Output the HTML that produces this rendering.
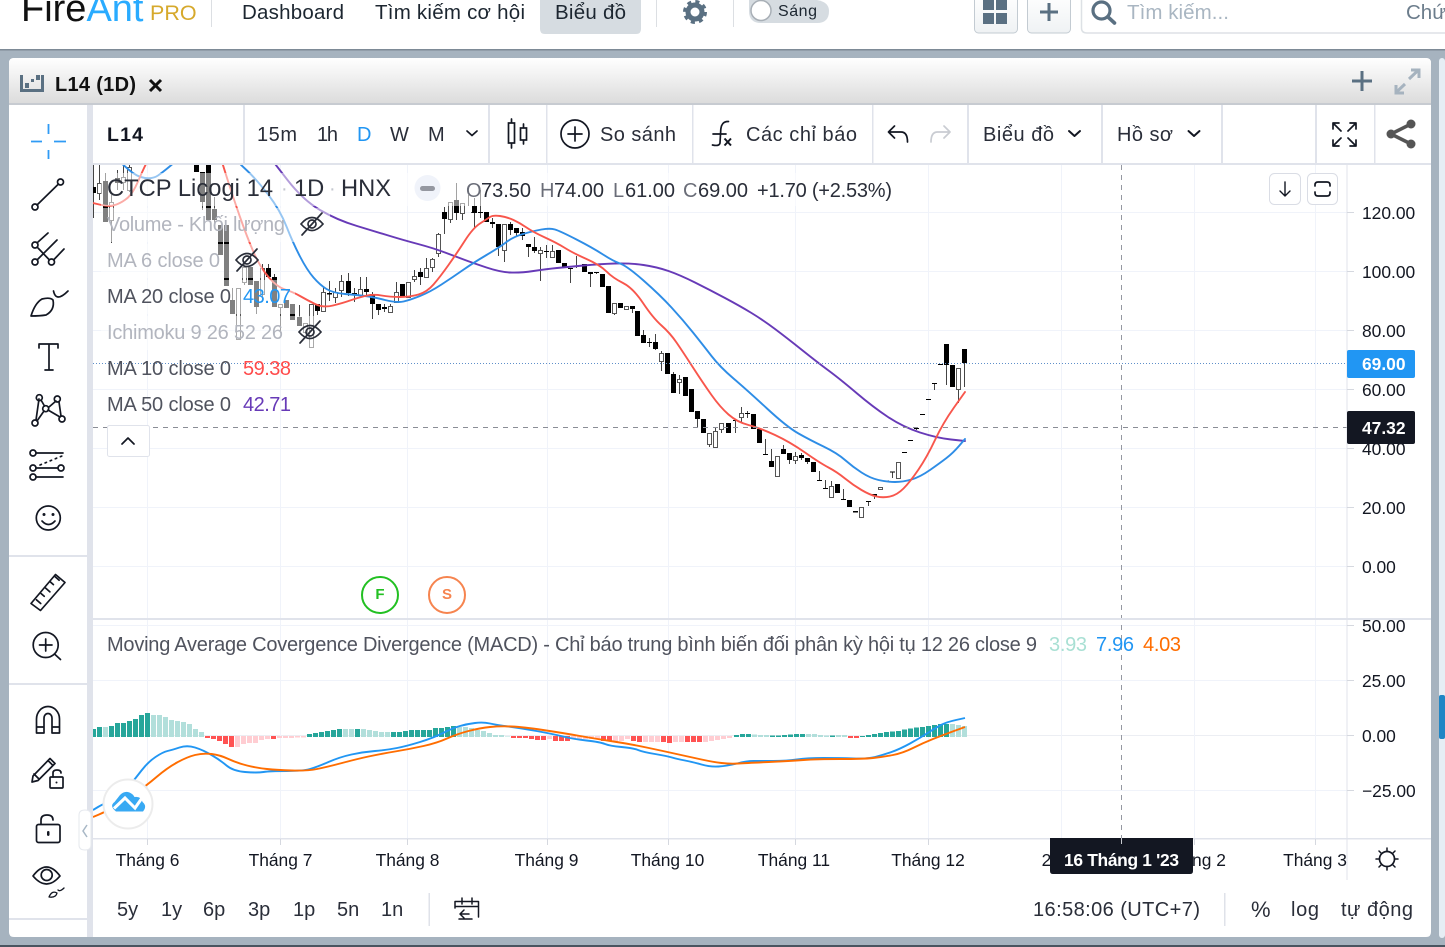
<!DOCTYPE html>
<html lang="vi"><head><meta charset="utf-8"><title>FireAnt PRO - L14</title>
<style>
html,body{margin:0;padding:0;width:1445px;height:947px;overflow:hidden;background:#a6b3bf}
svg{display:block}
text{font-family:"Liberation Sans","Noto Sans CJK SC",sans-serif;fill:#131722}
.ic{fill:none;stroke:#131722;stroke-width:1.7;stroke-linecap:round;stroke-linejoin:round}
.ic2{fill:#fff;stroke:#131722;stroke-width:1.7}
.sep{fill:#e0e3eb}
.tb{font-size:20px;fill:#2a2e39}
.ax{font-size:17.4px;fill:#131722}
.lg{font-size:20px}
</style></head><body>
<svg width="1445" height="947" viewBox="0 0 1445 947" xmlns="http://www.w3.org/2000/svg">
<defs>
<linearGradient id="hd" x1="0" y1="0" x2="0" y2="1"><stop offset="0" stop-color="#fff"/><stop offset="1" stop-color="#dcdcdc"/></linearGradient>
<linearGradient id="bt" x1="0" y1="0" x2="0" y2="1"><stop offset="0" stop-color="#fff"/><stop offset="1" stop-color="#eff2f4"/></linearGradient>
<clipPath id="cp"><rect x="93" y="165" width="1254" height="453"/></clipPath>
<clipPath id="cm"><rect x="93" y="620" width="1254" height="218"/></clipPath>
<g id="eye"><path d="M-11 0Q0-13 11 0Q0 13-11 0Z" fill="none" stroke="#2a2e39" stroke-width="1.7"/><circle r="4" fill="none" stroke="#2a2e39" stroke-width="1.7"/><path d="M-10 11L10-11" stroke="#2a2e39" stroke-width="1.7" stroke-linecap="round"/></g>
</defs>

<!-- page -->
<rect width="1445" height="947" fill="#a6b3bf"/>
<rect x="0" y="945" width="1445" height="2" fill="#4a5560"/>
<rect x="0" y="0" width="1445" height="49" fill="#fff"/>
<rect x="0" y="49" width="1445" height="1.5" fill="#7d8a96"/>
<rect x="1439" y="58" width="6" height="880" rx="3" fill="#e6eef5"/>
<rect x="1439" y="695" width="6" height="44" rx="2" fill="#1f86c5"/>

<!-- top nav -->
<text x="21" y="21" font-size="38" style="fill:#111">Fire<tspan style="fill:#29abff">Ant</tspan></text>
<text x="150" y="20" font-size="21.5" style="fill:#d6a92c">PRO</text>
<rect x="211" y="0" width="1" height="27" fill="#dcdfe3"/>
<text x="242" y="19" font-size="20.5" textLength="102" style="fill:#1c2630">Dashboard</text>
<text x="375" y="19" font-size="20.5" textLength="150" style="fill:#1c2630">Tìm kiếm cơ hội</text>
<path d="M540 0H641V29Q641 34 636 34H545Q540 34 540 29Z" fill="#d6dce1"/>
<text x="555" y="19" font-size="20.5" textLength="71" style="fill:#1c2630">Biểu đồ</text>
<rect x="656" y="0" width="1" height="27" fill="#dcdfe3"/>
<circle cx="695" cy="12" r="7" fill="none" stroke="#5a7082" stroke-width="5"/>
<circle cx="695" cy="12" r="10.5" fill="none" stroke="#5a7082" stroke-width="3" stroke-dasharray="4.1 4.15"/>
<rect x="733" y="0" width="1" height="27" fill="#dcdfe3"/>
<path d="M749 0H817Q829 2 829 11Q829 23 817 23H761Q749 23 749 11Z" fill="#d6dce1"/>
<circle cx="761" cy="10.5" r="10" fill="#fff" stroke="#a8afb6" stroke-width="1.5"/>
<text x="778" y="16" font-size="16" textLength="39" style="fill:#1c2630">Sáng</text>

<rect x="974.5" y="-6" width="43" height="39" rx="4" fill="url(#bt)" stroke="#c3cbd2"/>
<path d="M983 0h11v10h-11zM996 0h11v10h-11zM983 13h11v11h-11zM996 13h11v11h-11z" fill="#5a7082"/>
<rect x="1027.5" y="-6" width="43" height="39" rx="4" fill="url(#bt)" stroke="#c3cbd2"/>
<path d="M1040 12h18M1049 3v18" stroke="#5a7082" stroke-width="3"/>
<path d="M1081.5 0V28Q1081.5 33 1087 33H1445" fill="none" stroke="#dde1e5" stroke-width="1.5"/>
<circle cx="1101.5" cy="10.5" r="8.5" fill="none" stroke="#5a7082" stroke-width="3.2"/>
<path d="M1108 17L1114.5 23" stroke="#5a7082" stroke-width="3.6" stroke-linecap="round"/>
<text x="1127" y="19" font-size="20.5" textLength="102" style="fill:#a9b6c2">Tìm kiếm...</text>
<text x="1406" y="19" font-size="20.5" style="fill:#6c7d8c">Chứng khoán</text>

<!-- panel -->
<path d="M14 58H1426Q1431 58 1431 63V932Q1431 937 1426 937H14Q9 937 9 932V63Q9 58 14 58Z" fill="#fff"/>
<path d="M14 58H1426Q1431 58 1431 63V103H9V63Q9 58 14 58Z" fill="url(#hd)"/>
<rect x="9" y="103" width="1422" height="2" fill="#c7cbd1"/>
<path d="M20 75h3v14h18v-14h3v17h-24z" fill="#5a7082"/>
<path d="M25 83h4v5h-4zM31 79h3v3h-3zM36 75h4v5h-4z" fill="#5a7082"/>
<text x="55" y="91" font-size="20" font-weight="700" textLength="81" style="fill:#111">L14 (1D)</text>
<path d="M150 80L161 91M161 80L150 91" stroke="#111" stroke-width="3"/>
<path d="M1352 81h20M1362 71v20" stroke="#5a7082" stroke-width="3"/>
<path d="M1395.5 93L1405 84M1396 85v8h8M1409 79L1418.5 70M1411 70h8v8" fill="none" stroke="#a6b3bf" stroke-width="3"/>

<!-- gutters -->
<rect x="87" y="105" width="6" height="832" fill="#e0e3eb"/>
<rect x="9" y="555" width="78" height="2" fill="#e0e3eb"/>
<rect x="9" y="683" width="78" height="2" fill="#e0e3eb"/>
<rect x="9" y="918" width="78" height="2" fill="#e0e3eb"/>

<!-- top toolbar -->
<rect x="93" y="163" width="1338" height="2" fill="#e0e3eb"/>
<path class="sep" d="M243 105h2v58h-2zM488 105h2v58h-2zM546 105h1.5v58h-1.5zM692 105h1.5v58h-1.5zM872 105h1.5v58h-1.5zM967 105h2v58h-2zM1101 105h2v58h-2zM1221 105h2v58h-2zM1315 105h2v58h-2zM1374 105h1.5v58h-1.5z"/>
<text x="107" y="141" font-size="19.5" font-weight="700" textLength="36">L14</text>
<text class="tb" x="257" y="141" textLength="40">15m</text>
<text class="tb" x="317" y="141" textLength="21">1h</text>
<text class="tb" x="357" y="141" style="fill:#2196f3">D</text>
<text class="tb" x="390" y="141">W</text>
<text class="tb" x="428" y="141">M</text>
<path class="ic" d="M467 131l5 4.500 5-4.500"/>
<path class="ic" d="M511.500 119v29M523.500 124v20"/><rect class="ic2" x="508.500" y="123" width="6" height="20"/><rect class="ic2" x="520.500" y="128" width="6" height="12"/>
<circle class="ic" cx="575" cy="134" r="14"/><path class="ic" d="M568 134h14M575 127v14"/>
<text class="tb" x="600" y="141" textLength="76">So sánh</text>
<path class="ic" d="M728.500 121.500Q721 121 720.700 131L720 143Q719.500 146.500 712.500 145M713 134h13"/>
<path d="M724.500 138.500L731 145.500M731 138.500L724.500 145.500" stroke="#131722" stroke-width="2"/>
<text class="tb" x="746" y="141" textLength="111">Các chỉ báo</text>
<path class="ic" d="M894.500 126L888.500 132L894.500 138M888.500 132H901Q907.500 132 907.500 142"/>
<path class="ic" d="M944 126L950 132L944 138M950 132H937.500Q931 132 931 142" style="stroke:#c9ccd2"/>
<text class="tb" x="983" y="141" textLength="71">Biểu đồ</text>
<path class="ic" d="M1069 131l5.500 5 5.500-5" style="stroke-width:2"/>
<text class="tb" x="1117" y="141" textLength="56">Hồ sơ</text>
<path class="ic" d="M1188.500 131l5.500 5 5.500-5" style="stroke-width:2"/>
<path class="ic" d="M1333 123l8 8M1333 129v-6h6M1356 123l-8 8M1356 129v-6h-6M1333 146l8-8M1333 140v6h6M1356 146l-8-8M1356 140v6h-6"/>
<path d="M1411 124L1391 134L1411 144" fill="none" stroke="#555" stroke-width="3.500"/><circle cx="1411" cy="124" r="4.500" fill="#555"/><circle cx="1391" cy="134" r="4.500" fill="#555"/><circle cx="1411" cy="144" r="4.500" fill="#555"/>

<!-- left toolbar icons -->
<path d="M48.500 124v10M48.500 150v9M31 141.500h11M54 141.500h12" stroke="#2f9bf5" stroke-width="1.800"/>
<path class="ic" d="M37 205L58.500 184"/><circle class="ic" cx="35" cy="207" r="3"/><circle class="ic" cx="60.500" cy="182" r="3"/>
<path class="ic" d="M38 242L48 233M37.500 259.500L57 240M54 259.500L64 249M38 248L49 259.500"/><circle class="ic" cx="35" cy="245" r="3"/><circle class="ic" cx="35" cy="262" r="3"/><circle class="ic" cx="51.500" cy="262" r="3"/>
<path class="ic" d="M31 316Q35 303 42 299Q50 297 53 300Q55 310 46 315Q40 316 31 316ZM53.500 291Q56 303 68 291"/>
<path class="ic" d="M39 348V344H58V348M49 344V370M45 370H53"/>
<path class="ic" d="M39 399L36 420M41 400L44.500 406M56 401L49 407M48 410L60 417M59 402L61 416M44 411L37 421"/><circle class="ic" cx="39.300" cy="397.700" r="3"/><circle class="ic" cx="57.300" cy="399" r="3"/><circle class="ic" cx="45.700" cy="408.700" r="3"/><circle class="ic" cx="35" cy="423" r="3"/><circle class="ic" cx="62" cy="419" r="3"/>
<path class="ic" d="M36 453H63M36 477H63M36 468H58"/><path class="ic" d="M40 465L62 456" stroke-dasharray="1.500 4"/><circle class="ic" cx="33" cy="453" r="3"/><circle class="ic" cx="33" cy="468" r="3"/><circle class="ic" cx="61" cy="468" r="3"/><circle class="ic" cx="33" cy="477" r="3"/>
<circle class="ic" cx="48.300" cy="518" r="12"/><circle cx="44" cy="514.500" r="1.500" fill="#131722"/><circle cx="53" cy="514.500" r="1.500" fill="#131722"/><path class="ic" d="M42 521Q48.500 528 55 521"/>
<path class="ic" d="M31 604L55.500 575L65 583L40.500 611Z" transform="translate(0 -.5)"/><path class="ic" d="M36 599l4 4M41 593l3 3M46 588l4 4M51 582l3 3M56 577l4 4" transform="rotate(-4 48 593)"/>
<circle class="ic" cx="45.700" cy="645" r="12.500"/><path class="ic" d="M39.500 645h12.500M45.700 639v12M54.500 654L60.500 659.500"/>
<path class="ic" d="M36.500 733V719A11.500 12.500 0 0 1 59.500 719V733H52V718A4 4.500 0 0 0 44 718V733ZM36.500 727H44M52 727H59.500"/>
<path class="ic" d="M33 776L32 782L38 780.500L55 763.500L50 758.500ZM48 760.500L53 765.500M34 774L39 779"/>
<rect class="ic" x="50" y="777" width="13" height="11" rx="1"/><path class="ic" d="M53 777V773Q53 770 57 770Q61 770 61 773"/><circle cx="56.500" cy="782.500" r="1" fill="#131722"/>
<rect class="ic" x="36.500" y="824.500" width="23.500" height="18" rx="2"/><path class="ic" d="M41 824V820Q41 815 47 815Q53 815 53 820"/><rect x="47" y="831" width="2.500" height="5" rx="1.200" fill="#131722"/>
<path class="ic" d="M33 876Q46.500 858 60 876Q46.500 892 33 876Z"/><circle class="ic" cx="46.700" cy="875" r="5.500"/>
<path class="ic" d="M49 897Q52 890 57 893Q56 898 49 897ZM58 890Q60 892 64 888" style="stroke-width:1.300"/>

<!-- chart grid -->
<g fill="none" stroke="#f0f3fa" stroke-width="1">
<path d="M93 212.500H1347M93 271.500H1347M93 330.500H1347M93 389.500H1347M93 448.500H1347M93 507.500H1347M93 566.500H1347M93 625.500H1347M93 680.500H1347M93 790.500H1347"/>
<path d="M93 735.500H1347" stroke="#eceef3"/>
<path d="M147.500 165V838M280.500 165V838M407.500 165V838M547.500 165V838M668.500 165V838M795.500 165V838M928.500 165V838M1061.500 165V838M1194.500 165V838M1315.500 165V838"/>
</g>

<!-- candles -->
<g clip-path="url(#cp)">
<path fill="none" stroke="#444" stroke-width="1" shape-rendering="crispEdges" d="
M93.500 165V218M99.500 165V200M105.500 173V222M111.500 195V243M117.500 170V190M123.500 165V190M129.500 165V192
M196.500 165V172M202.500 172V210M208.500 165V220M214.500 197V225M220.500 225V255M226.500 225V286M232.500 288V314M238.500 288V339M244.500 262V285M250.500 267V285M256.500 281V314M262.500 264V300M268.500 264V277M274.500 274V307M280.500 304V333M286.500 300V308M292.500 304V320M299.500 305V326M305.500 323V332M311.500 304V347M317.500 304V315M323.500 287V311M329.500 281V301M335.500 288V303M341.500 275V297M348.500 273V296M354.500 288V302M360.500 277V297M366.500 277V296M372.500 292V319M378.500 304V315M384.500 304V312M390.500 304V313M396.500 282V302M402.500 284V297M408.500 282V297M414.500 270V282M420.500 268V285M426.500 258V277M432.500 258V272M438.500 233V257M444.500 207V234M450.500 202V223M456.500 183V220M462.500 203V220M468.500 195V206M474.500 198V228M480.500 190V218
M486.500 213V222M492.500 218V228M498.500 224V256M504.500 224V262M510.500 222V235M516.500 228V237M522.500 228V240M528.500 244V257M534.500 237V253M540.500 247V281M546.500 245V258M552.500 245V258M558.500 250V263M564.500 263V268M570.500 268V283M576.500 256V268M584.500 264V272M590.500 272V287M596.500 272V274M602.500 274V287M608.500 286V313M614.500 303V315M620.500 303V308M626.500 306V309M632.500 306V313M637.500 311V336M643.500 330V343M649.500 338V347M655.500 334V350M661.500 351V371M667.500 353V374M673.500 372V393M679.500 375V394M685.500 377V396M691.500 389V412M697.500 411V427M703.500 427V433M709.500 433V447M715.500 427V447M721.500 423V433M728.500 423V433M735.500 420V433M741.500 407V422M747.500 411V418M753.500 414V429M759.500 429V443M765.500 439V455M771.500 449V467M777.500 456V476M783.500 445V454M789.500 453V464M795.500 452V464M801.500 453V460M807.500 458V464M813.500 462V472M819.500 471V481M825.500 480V489M831.500 481V497M837.500 484V493M843.500 489V500M849.500 500V507M855.500 511V512M861.500 507V517M868.500 502V506M874.500 494V499M880.500 487V489M886.500 481V482M892.500 472V478M898.500 462V478M904.500 452V453M910.500 440V441M916.500 428V430M922.500 414V415M928.500 399V400M934.500 383V390M940.500 364V365M946.500 344V385M952.500 365V387M958.500 368V403M964.500 349V387
M464.500 203V205M471.500 212V213"/>
<path fill="none" stroke="#000" stroke-width="5" shape-rendering="crispEdges" d="
M93.500 187V193M105.500 181V222M117.500 178V183M196.500 164V172M202.500 172V202M208.500 164V220M214.500 209V220M220.500 225V255M226.500 225V286M232.500 300V314M250.500 267V285M256.500 281V307M268.500 268V277M274.500 277V307M286.500 300V308M292.500 304V320M299.500 317V326M317.500 304V311M329.500 293V294.500M348.500 281V293M354.500 293V295M366.500 289V292M372.500 294V304M378.500 304V310M384.500 307V309M402.500 284V297M420.500 272V277M444.500 212V219M456.500 200V213M474.500 206V213M480.500 212V213M486.500 212V222
M492.500 222V224M498.500 224V247M510.500 224V230M516.500 228V233M522.500 232V236M528.500 244V247M534.500 247V251M546.500 251V252M558.500 250V263M564.500 263V268M570.500 268V269M576.500 266V267M584.500 264V272M590.500 272V274M596.500 272V273M602.500 274V287M608.500 286V313M620.500 303V308M632.500 306V309M637.500 311V336M643.500 335V343M649.500 342V343M655.500 342V349M667.500 353V374M673.500 374V393M685.500 377V396M691.500 389V412M697.500 411V419M703.500 419V433M728.500 423V433M735.500 420V421M747.500 413V414M753.500 414V429M759.500 429V443M765.500 454V455M771.500 461V467M783.500 449V454M789.500 453V460M801.500 455V458M807.500 458V462M813.500 462V472M819.500 480V481M825.500 488V489M837.500 484V493M843.500 499V500M849.500 500V507M855.500 511V512.500M868.500 501V502M874.500 494V495.500M886.500 480.500V481.500M892.500 471.500V472.500M904.500 452V453M910.500 440V441M916.500 428V429M922.500 414V415M928.500 399V400M934.500 383V384M940.500 364V365M946.500 344V365M952.500 365V387M964.500 349V363"/>
<path fill="#fff" stroke="#555" stroke-width="1" shape-rendering="crispEdges" d="
M97.500 183.500h4v10h-4zM109.500 202.500h4v18h-4zM121.500 177.500h4v5h-4zM127.500 167.500h4v23h-4zM236.500 288.500h4v51h-4zM242.500 267.500h4v15h-4zM260.500 268.500h4v26h-4zM278.500 304.500h4v3h-4zM303.500 323.500h4v9h-4zM309.500 304.500h4v43h-4zM321.500 292.500h4v19h-4zM333.500 292.500h4v5h-4zM339.500 281.500h4v9h-4zM358.500 289.500h4v6h-4zM388.500 306.500h4v6h-4zM394.500 292.500h4v10h-4zM406.500 282.500h4v15h-4zM412.500 276.500h4v3h-4zM424.500 268.500h4v9h-4zM430.500 259.500h4v8h-4zM436.500 234.500h4v19h-4zM448.500 202.500h4v17h-4zM460.500 203.500h4v10h-4z
M502.500 224.500h4v26h-4zM538.500 250.500h4v3h-4zM550.500 251.500h4v6h-4zM612.500 303.500h4v10h-4zM624.500 306.500h4v3h-4zM659.500 353.500h4v8h-4zM677.500 379.500h4v3h-4zM707.500 433.500h4v11h-4zM713.500 431.500h4v16h-4zM719.500 423.500h4v6h-4zM739.500 413.500h4v4h-4zM775.500 456.500h4v20h-4zM793.500 456.500h4v4h-4zM829.500 486.500h4v11h-4zM859.500 507.500h4v10h-4zM878.500 487.500h4v2h-4zM896.500 462.500h4v16h-4zM956.500 368.500h4v21h-4z"/>
<path d="M91 187h5v6h-5z" fill="#000"/>
<!-- MAs -->
<g fill="none" stroke-width="1.900" stroke-linejoin="round" stroke-linecap="round">
<path stroke="#673ab7" d="M272 160L287.500 180Q303 200 320 210Q337 220 357 226Q377 232 390 236Q403 240 418 244Q433 248 445 252.500Q457 257 465 260Q473 263 486.500 267.500Q500 272 510 272.500Q520 273 533.500 271Q547 269 557 268Q567 267 583.500 265.500Q600 264 615 263.500Q630 263 643.500 265Q657 267 668.500 271Q680 275 695 282.500Q710 290 725 298Q740 306 751.500 313Q763 320 775 329Q787 338 802 350Q817 362 828.500 370.500Q840 379 856.500 393Q873 407 888 417Q903 427 920 432.500Q937 438 951 439.500L965 441"/>
<path stroke="#2e8de6" d="M120 162L128.500 169.500Q137 177 145 178Q153 179 158 175.500Q163 172 169 167L175 162"/>
<path stroke="#2e8de6" d="M238 162L247.500 171Q257 180 268.500 195Q280 210 286.500 226.500Q293 243 300 256.500Q307 270 313.500 277.500Q320 285 326.500 289Q333 293 345 294Q357 295 365 296Q373 297 385 300Q397 303 403.500 301.500Q410 300 420 296Q430 292 441.500 284.500Q453 277 463 270Q473 263 486.500 255Q500 247 506.500 242Q513 237 523 234Q533 231 541.500 229.500Q550 228 555 229.500Q560 231 576.500 239.500Q593 248 603 254.500Q613 261 620 263.500Q627 266 643.500 280.500Q660 295 671.500 307.500Q683 320 693 332.500Q703 345 711.500 356Q720 367 733.500 378.500Q747 390 767 408.500Q787 427 798.500 433.500Q810 440 823.500 446.500Q837 453 845 460Q853 467 861.500 472.500Q870 478 878.500 480Q887 482 895 482Q903 482 911.500 479.500Q920 477 930 470Q940 463 946.500 458Q953 453 959 446L965 439"/>
<path stroke="#f8564c" d="M93 203L101.500 205Q110 207 116.500 204.500Q123 202 128 197.500Q133 193 138 181.500Q143 170 145 166L147 162"/>
<path stroke="#f8564c" d="M222 162L227.500 179.500Q233 197 240 217Q247 237 253.500 252Q260 267 268.500 277Q277 287 285 289.500Q293 292 300 296Q307 300 315 304Q323 308 333 305.500Q343 303 350 300.500Q357 298 365 296Q373 294 381.500 295.500Q390 297 400 297Q410 297 418.500 294.500Q427 292 433.500 284.500Q440 277 448.500 265Q457 253 465 240.500Q473 228 480 223.500Q487 219 490 217Q493 215 500 216Q507 217 513.500 220Q520 223 526.500 227.500Q533 232 545 237.500Q557 243 565 248Q573 253 586.500 259Q600 265 606.500 271.500Q613 278 623 283Q633 288 643 303Q653 318 661.500 325.500Q670 333 676.500 342.500Q683 352 693 367.500Q703 383 711.500 395Q720 407 728.500 414.500Q737 422 748.500 425Q760 428 775 435Q790 442 805 452.500Q820 463 828.500 467.500Q837 472 845 478.500Q853 485 861.500 490Q870 495 876.500 496.500Q883 498 890 496.500Q897 495 903.500 488.500Q910 482 918.500 469.500Q927 457 935 440Q943 423 954 407.500L965 392"/>
</g>
<!-- legend fade overlays -->
<g fill="#fff" opacity=".5">
<rect x="101" y="173" width="795" height="33"/>
<rect x="101" y="208" width="229" height="34"/>
<rect x="101" y="244" width="161" height="34"/>
<rect x="101" y="280" width="194" height="34"/>
<rect x="101" y="316" width="229" height="34"/>
</g>
</g>

<!-- crosshair + price lines -->
<path d="M1121.500 165V838" stroke="#9598a1" stroke-dasharray="5 5" fill="none"/>
<path d="M93 427.500H1347" stroke="#8a8d96" stroke-dasharray="5 5" fill="none"/>
<path d="M93 363.500H1347" stroke="#5f8fc9" stroke-dasharray="1 2" fill="none"/>

<!-- legend -->
<text x="107" y="196" font-size="23.7" textLength="166" style="fill:#2a2e39">CTCP Licogi 14</text>
<text x="281" y="195" font-size="20" style="fill:#c4c7cf">·</text>
<text x="294" y="196" font-size="23.7" style="fill:#2a2e39">1D</text>
<text x="329" y="195" font-size="20" style="fill:#c4c7cf">·</text>
<text x="341" y="196" font-size="23.7" style="fill:#2a2e39">HNX</text>
<circle cx="427.500" cy="188" r="13" fill="#f0f3fa"/><rect x="420" y="186" width="15" height="5" rx="2.500" fill="#9598a1"/>
<text x="466" y="197" class="lg" style="fill:#6a6d78">O</text><text x="481" y="197" class="lg" textLength="50" style="fill:#2a2e39">73.50</text>
<text x="540" y="197" class="lg" style="fill:#6a6d78">H</text><text x="554" y="197" class="lg" textLength="50" style="fill:#2a2e39">74.00</text>
<text x="613" y="197" class="lg" style="fill:#6a6d78">L</text><text x="625" y="197" class="lg" textLength="50" style="fill:#2a2e39">61.00</text>
<text x="683" y="197" class="lg" style="fill:#6a6d78">C</text><text x="698" y="197" class="lg" textLength="50" style="fill:#2a2e39">69.00</text>
<text x="757" y="197" class="lg" textLength="135" style="fill:#2a2e39">+1.70 (+2.53%)</text>
<text x="107" y="231" class="lg" textLength="178" style="fill:#b2b5be">Volume - Khối lượng</text>
<use href="#eye" x="312" y="224"/>
<text x="107" y="267" class="lg" textLength="113" style="fill:#b2b5be">MA 6 close 0</text>
<use href="#eye" x="247" y="260"/>
<text x="107" y="303" class="lg" textLength="124" style="fill:#50535e">MA 20 close 0</text>
<text x="243" y="303" class="lg" textLength="48" style="fill:#2196f3">43.07</text>
<text x="107" y="339" class="lg" textLength="176" style="fill:#b2b5be">Ichimoku 9 26 52 26</text>
<use href="#eye" x="310" y="332"/>
<text x="107" y="375" class="lg" textLength="124" style="fill:#50535e">MA 10 close 0</text>
<text x="243" y="375" class="lg" textLength="48" style="fill:#ff4b4b">59.38</text>
<text x="107" y="411" class="lg" textLength="124" style="fill:#50535e">MA 50 close 0</text>
<text x="243" y="411" class="lg" textLength="48" style="fill:#673ab7">42.71</text>
<rect x="107.500" y="425.500" width="42" height="31" rx="2" fill="#fff" stroke="#e0e3eb"/>
<path class="ic" d="M122 444l6-6 6 6"/>

<!-- chart buttons -->
<rect x="1269.500" y="173.500" width="31" height="31" rx="5" fill="#fff" stroke="#dadde5"/>
<path class="ic" d="M1285 182V196M1280 191l5 5 5-5" style="stroke-width:1.400"/>
<rect x="1307.500" y="173.500" width="30" height="31" rx="5" fill="#fff" stroke="#dadde5"/>
<path class="ic" d="M1315 186V185Q1315 182 1318 182H1327Q1330 182 1330 185V186M1315 192V193Q1315 196 1318 196H1327Q1330 196 1330 193V192"/>

<!-- F / S marks -->
<circle cx="380" cy="595" r="18" fill="#fff" stroke="#22c022" stroke-width="2"/>
<text x="380" y="599" font-size="15" font-weight="700" text-anchor="middle" style="fill:#22c022">F</text>
<circle cx="447" cy="595" r="18" fill="#fff" stroke="#f6844f" stroke-width="2"/>
<text x="447" y="599" font-size="15" font-weight="700" text-anchor="middle" style="fill:#f6844f">S</text>

<!-- pane divider -->
<rect x="93" y="618" width="1338" height="2" fill="#e0e3eb"/>

<!-- MACD -->
<text x="107" y="651" class="lg" textLength="930" style="fill:#50535e">Moving Average Covergence Divergence (MACD) - Chỉ báo trung bình biến đối phân kỳ hội tụ 12 26 close 9</text>
<text x="1049" y="651" class="lg" textLength="38" style="fill:#a9e0d4">3.93</text>
<text x="1096" y="651" class="lg" textLength="38" style="fill:#2196f3">7.96</text>
<text x="1143" y="651" class="lg" textLength="38" style="fill:#ff6d00">4.03</text>

<g clip-path="url(#cm)" fill="none" stroke-width="5" shape-rendering="crispEdges">
<path stroke="#26a69a" d="M93.500 729V737M99.500 727V737M111.500 726V737M117.500 723V737M123.500 723V737M129.500 721V737M135.500 719V737M141.500 715V737M147.500 713V737M309.500 734V737M315.500 733V737M321.500 732V737M327.500 731V737M333.500 730V737M339.500 729V737M357.500 729V737M393.500 732V737M399.500 732V737M405.500 731V737M411.500 730V737M417.500 730V737M423.500 730V737M429.500 730V737M435.500 728V737M441.500 728V737M447.500 727V737M453.500 726V737M736.500 735V737M742.500 734V737M748.500 734V737M772.500 735.500V737M778.500 735.500V737M784.500 735V737M790.500 734.500V737M796.500 734V737M802.500 734V737M832.500 735.500V737M862.500 736V737M868.500 735V737M874.500 734V737M880.500 733V737M886.500 732V737M892.500 731.500V737M898.500 731V737M904.500 729.500V737M910.500 728.500V737M916.500 727.500V737M922.500 727V737M928.500 726V737M934.500 725V737M940.500 724V737M946.500 724V737"/>
<path stroke="#b2dfdb" d="M105.500 727V737M153.500 715V737M159.500 715V737M165.500 717V737M171.500 720V737M177.500 721V737M183.500 722V737M189.500 724V737M195.500 729V737M201.500 732V737M345.500 729V737M351.500 729V737M363.500 729V737M369.500 730V737M375.500 731V737M381.500 732V737M387.500 732V737M459.500 727V737M465.500 727V737M471.500 728V737M477.500 730V737M483.500 731V737M489.500 733V737M495.500 735V737M501.500 735V737M507.500 736.500V737M754.500 734.500V737M760.500 735V737M766.500 735V737M808.500 734V737M814.500 734V737M820.500 735V737M826.500 735.500V737M838.500 735V737M844.500 735V737M952.500 724V737M958.500 725V737M964.500 726V737"/>
<path stroke="#ff5252" d="M207.500 736V738M213.500 736V739M219.500 736V741M225.500 736V744M231.500 736V747M273.500 736V739M513.500 736V738M519.500 736V738M525.500 736V738M531.500 736V739M537.500 736V740M543.500 736V740M555.500 736V741M561.500 736V741M567.500 736V741M603.500 736V741M609.500 736V741M633.500 736V741M639.500 736V742M663.500 736V742M669.500 736V743M687.500 736V742M693.500 736V742M699.500 736V742M850.500 736V738M856.500 736V738"/>
<path stroke="#ffcdd2" d="M237.500 736V747M243.500 736V744M249.500 736V743M255.500 736V743M261.500 736V740M267.500 736V739M279.500 736V738M285.500 736V738M291.500 736V738M297.500 736V737.500M303.500 736V737.500M549.500 736V739M573.500 736V739M579.500 736V739M585.500 736V739M591.500 736V739M597.500 736V739M615.500 736V742M621.500 736V741M627.500 736V739M645.500 736V742M651.500 736V742M657.500 736V742M675.500 736V742M681.500 736V742M705.500 736V742M711.500 736V741M717.500 736V740M723.500 736V739M729.500 736V738"/>
</g>
<g clip-path="url(#cm)" fill="none" stroke-width="1.900" stroke-linejoin="round">
<path stroke="#2196f3" d="M93 810L98 807Q103 804 111.500 800.500Q120 797 127.500 788Q135 779 141.500 770.500Q148 762 155.500 757Q163 752 167.500 751Q172 750 179.500 747.500Q187 745 195 747.500Q203 750 211.500 755Q220 760 226.500 765.500Q233 771 245 772Q257 773 263.500 772Q270 771 286.500 771Q303 771 310 769Q317 767 328.500 762Q340 757 351.500 754.500Q363 752 375 751Q387 750 397 748Q407 746 420 742Q433 738 443 733Q453 728 460 726Q467 724 475 723Q483 722 490 723.500Q497 725 508.500 726.500Q520 728 536.500 731Q553 734 563 736.500Q573 739 586.500 740.500Q600 742 605 744Q610 746 621.500 747Q633 748 638 750Q643 752 655 754Q667 756 672 757.500Q677 759 685 760.500Q693 762 701.500 764.500Q710 767 718.500 766.500Q727 766 737 763.500Q747 761 753.500 761Q760 761 773.500 761Q787 761 797 759.500Q807 758 823.500 758Q840 758 853.500 758.500Q867 759 875 757Q883 755 891.500 752Q900 749 910 743.500Q920 738 928.500 732.500Q937 727 942 724.500Q947 722 956 720L965 718"/>
<path stroke="#ff6d00" d="M93 817L99 814.500Q105 812 115 806Q125 800 135.500 793Q146 786 156.500 777Q167 768 177 762.500Q187 757 195 755Q203 753 211.500 754Q220 755 228.500 759Q237 763 247 765.500Q257 768 267 769Q277 770 292 770.500Q307 771 317 769Q327 767 342 763Q357 759 368.500 756.500Q380 754 395 751.500Q410 749 423.500 746Q437 743 447 738.500Q457 734 468.500 731Q480 728 490 727Q500 726 511.500 726.500Q523 727 543 730Q563 733 580 736Q597 739 613.500 741.500Q630 744 646.500 747.500Q663 751 676.500 754Q690 757 701.500 759.500Q713 762 721.500 763Q730 764 738.500 763.500Q747 763 768.500 762Q790 761 803.500 760Q817 759 840 759Q863 759 873 758Q883 757 893 755Q903 753 913 748Q923 743 933 739Q943 735 954 731L965 727"/>
</g>

<!-- TV logo -->
<circle cx="128" cy="804" r="24.500" fill="#fff" stroke="#ececec" stroke-width="2"/>
<path d="M116 811.500Q109 806 114.500 802L120 795Q124.500 790.500 129.500 792.500Q133 794 134.500 797Q141 796 142.500 802Q147.500 806 143 811.500Z" fill="#38a9f3"/>
<path d="M114 808.500L125 798L135 808L142 798" fill="none" stroke="#fff" stroke-width="3"/>
<path d="M85 810Q91 810 91 815V845Q91 850 85 850Q79 850 79 845V815Q79 810 85 810Z" fill="#fff" stroke="#e6e9ee"/>
<path d="M87 825L83 831L87 837" fill="none" stroke="#a8b8c6" stroke-width="1.500"/>

<!-- price axis -->
<rect x="1346.500" y="165" width="1" height="715" fill="#e0e3eb"/>
<path d="M1347 212.500h7M1347 271.500h7M1347 330.500h7M1347 389.500h7M1347 448.500h7M1347 507.500h7M1347 566.500h7M1347 625.500h7M1347 680.500h7M1347 735.500h7M1347 790.500h7" stroke="#d5d8df" fill="none"/>
<text class="ax" x="1362" y="219">120.00</text>
<text class="ax" x="1362" y="278">100.00</text>
<text class="ax" x="1362" y="337">80.00</text>
<text class="ax" x="1362" y="396">60.00</text>
<text class="ax" x="1362" y="455">40.00</text>
<text class="ax" x="1362" y="514">20.00</text>
<text class="ax" x="1362" y="573">0.00</text>
<text class="ax" x="1362" y="632">50.00</text>
<text class="ax" x="1362" y="687">25.00</text>
<text class="ax" x="1362" y="742">0.00</text>
<text class="ax" x="1362" y="797">−25.00</text>
<rect x="1347" y="350" width="68" height="28" rx="2" fill="#2196f3"/>
<text x="1362" y="370" font-size="17.400" font-weight="700" style="fill:#fff">69.00</text>
<rect x="1347" y="411" width="68" height="33" rx="2" fill="#131722"/>
<text x="1362" y="434" font-size="17.400" font-weight="700" style="fill:#fff">47.32</text>

<!-- time axis -->
<rect x="93" y="838" width="1338" height="1.500" fill="#e0e3eb"/>
<path d="M147.500 839v6M280.500 839v6M407.500 839v6M547.500 839v6M668.500 839v6M795.500 839v6M928.500 839v6M1061.500 839v6M1194.500 839v6M1315.500 839v6" stroke="#d5d8df" fill="none"/>
<text class="ax" x="147.500" y="866" text-anchor="middle">Tháng 6</text>
<text class="ax" x="280.500" y="866" text-anchor="middle">Tháng 7</text>
<text class="ax" x="407.500" y="866" text-anchor="middle">Tháng 8</text>
<text class="ax" x="546.500" y="866" text-anchor="middle">Tháng 9</text>
<text class="ax" x="667.500" y="866" text-anchor="middle">Tháng 10</text>
<text class="ax" x="794" y="866" text-anchor="middle">Tháng 11</text>
<text class="ax" x="928" y="866" text-anchor="middle">Tháng 12</text>
<text class="ax" x="1061" y="866" text-anchor="middle">2023</text>
<text class="ax" x="1194" y="866" text-anchor="middle">Tháng 2</text>
<text class="ax" x="1315" y="866" text-anchor="middle">Tháng 3</text>
<path d="M1050 838H1193V871Q1193 874 1190 874H1053Q1050 874 1050 871Z" fill="#131722"/>
<path d="M1121.500 838v6" stroke="#c8cad0"/>
<text x="1064" y="866" font-size="17.400" font-weight="700" textLength="115" style="fill:#fff">16 Tháng 1 '23</text>
<circle class="ic" cx="1387" cy="859" r="7.500"/>
<path class="ic" d="M1387 848v3M1387 867v3M1376 859h3M1395 859h3M1379 851l2 2M1393 865l2 2M1395 851l-2 2M1379 867l2-2" style="stroke-width:1.500"/>

<!-- bottom bar -->
<text class="tb" x="117" y="916">5y</text>
<text class="tb" x="161" y="916">1y</text>
<text class="tb" x="203" y="916">6p</text>
<text class="tb" x="248" y="916">3p</text>
<text class="tb" x="293" y="916">1p</text>
<text class="tb" x="337" y="916">5n</text>
<text class="tb" x="381" y="916">1n</text>
<rect x="428.500" y="893" width="1.500" height="33" fill="#dfe2e9"/>
<path class="ic" d="M455 901.500H478.500V917M455 906.500H478.500M462 898v6M472 898v6M455 901.500V908M460 914H469M472 919H459M464 910l-4 4 4 4" style="stroke-width:1.500"/>
<text class="tb" x="1033" y="916" textLength="167">16:58:06 (UTC+7)</text>
<rect x="1224" y="893" width="1.500" height="33" fill="#dfe2e9"/>
<text class="tb" x="1251" y="917" style="font-size:22px">%</text>
<text class="tb" x="1291" y="916" textLength="28">log</text>
<text class="tb" x="1341" y="916" textLength="72">tự động</text>
</svg>
</body></html>
